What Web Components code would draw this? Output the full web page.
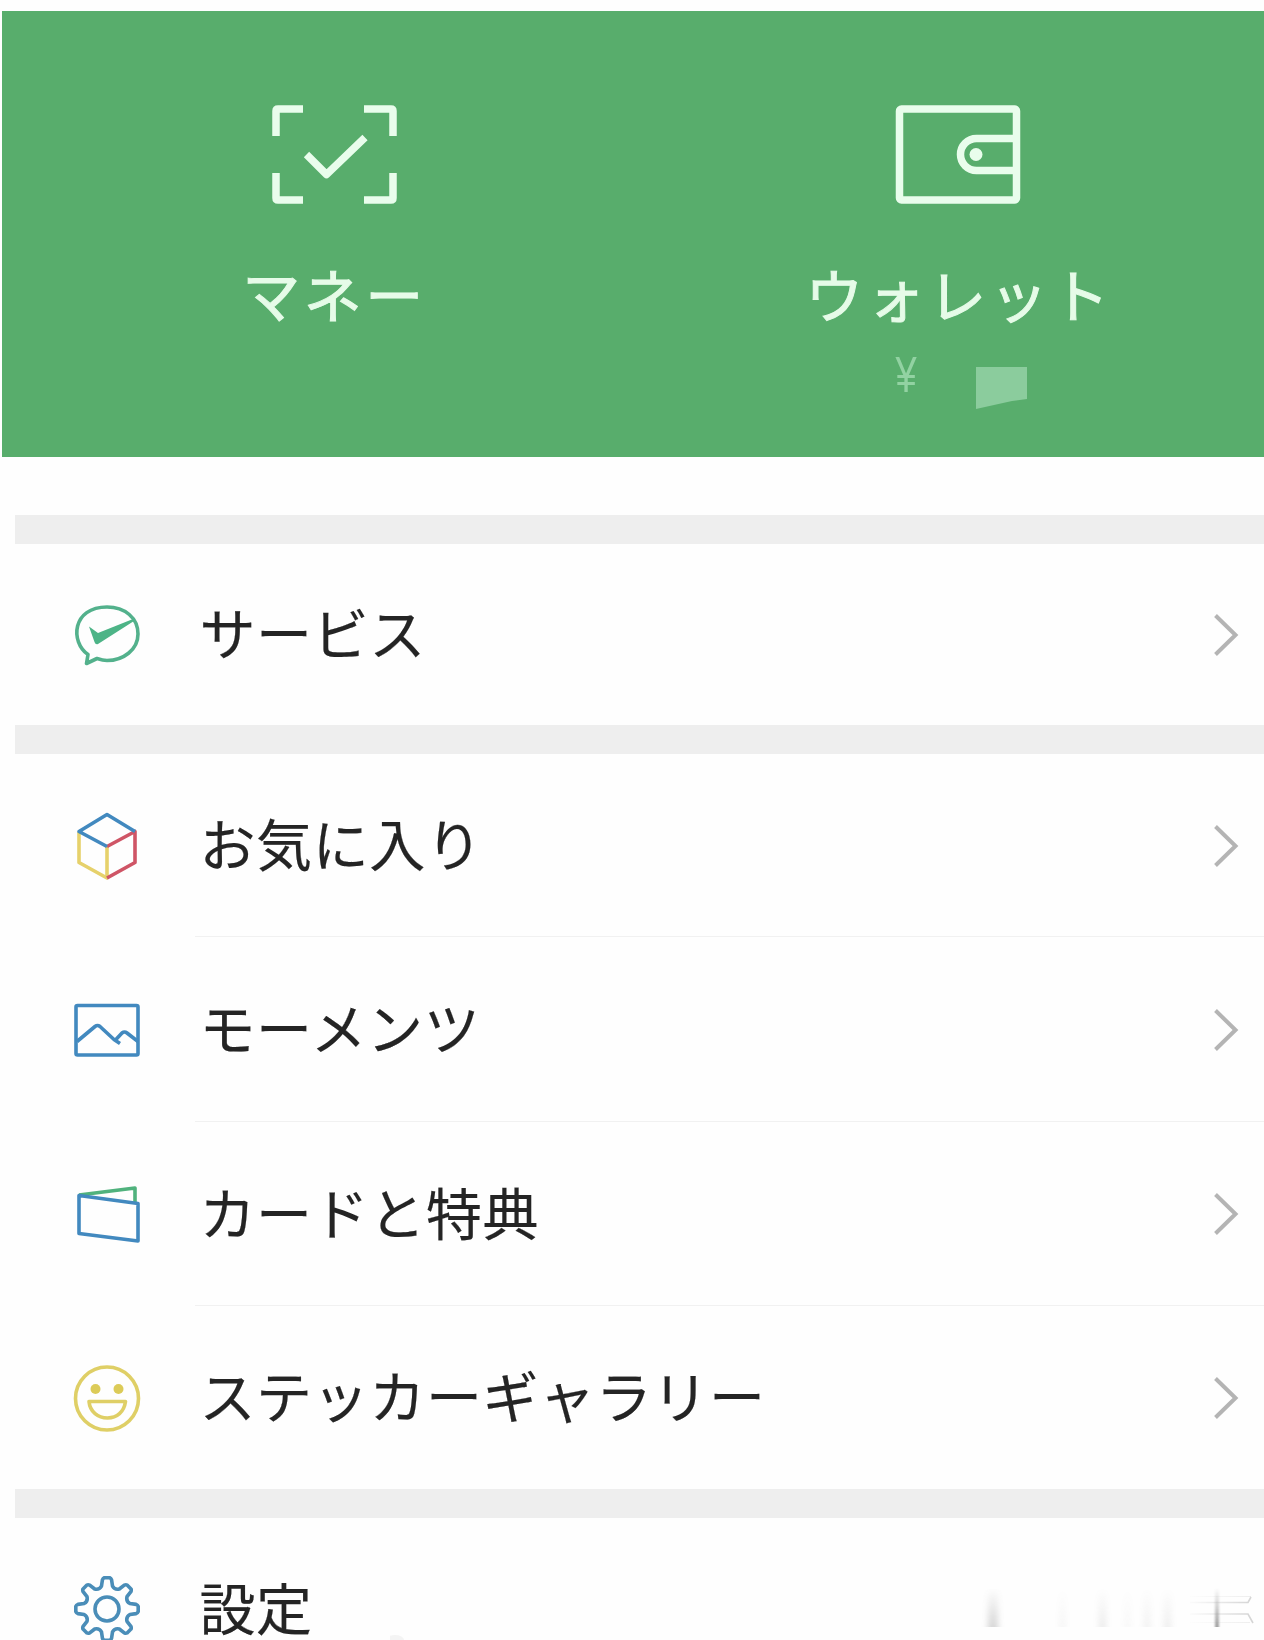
<!DOCTYPE html>
<html lang="ja">
<head>
<meta charset="utf-8">
<title>マイページ</title>
<style>
body {
    margin: 0;
    width: 1264px;
    height: 1640px;
    overflow: hidden;
    background: #fefefe;
    color: #242424;
    font-family: "Noto Sans CJK JP", sans-serif;
}
</style>
</head>
<body>

<me-page>
    <pay-panel slot="top">
        <pay-item icon="scan" style="--shift: 0">マネー</pay-item>
        <pay-item icon="wallet" style="--shift: 3px">ウォレット<wallet-balance slot="extra">¥</wallet-balance></pay-item>
    </pay-panel>

    <menu-group>
        <menu-row icon="service" style="--row: 181px">サービス</menu-row>
    </menu-group>

    <menu-group>
        <menu-row icon="cube" line style="--row: 183px">お気に入り</menu-row>
        <menu-row icon="photo" line style="--row: 185px">モーメンツ</menu-row>
        <menu-row icon="cards" line style="--row: 184px">カードと特典</menu-row>
        <menu-row icon="smile" style="--row: 183px">ステッカーギャラリー</menu-row>
    </menu-group>

    <menu-group>
        <menu-row icon="gear" plain style="--row: 182px">設定</menu-row>
    </menu-group>

    <corner-mark slot="mark"></corner-mark>
</me-page>

<script>
// eight rounded teeth around (40, 40)
function gearPath() {
    const point = (r, deg) => {
        const a = deg * Math.PI / 180;
        return (40 + r * Math.sin(a)).toFixed(1) + ' ' + (40 - r * Math.cos(a)).toFixed(1);
    };
    let d = '';
    for (let i = 0; i < 8; i++) {
        const a = i * 45;
        d += (i ? 'L' : 'M') + point(23.5, a - 13.5);
        d += 'L' + point(29.5, a - 9) + 'Q' + point(31, a - 7.5) + ' ' + point(31.3, a - 5);
        d += 'L' + point(31.3, a + 5) + 'Q' + point(31, a + 7.5) + ' ' + point(29.5, a + 9);
        d += 'L' + point(23.5, a + 13.5) + 'Q' + point(20.5, a + 22.5) + ' ' + point(23.5, a + 31.5);
    }
    return d + 'Z';
}

const icons = {
    scan: `<svg width="126" height="100" viewBox="0 0 126 100" fill="none" stroke="#e9fdec" stroke-width="7.5">
        <path d="M4 31V6Q4 4 6 4H31M92 4H119Q121 4 121 6V31M4 68V93Q4 95 6 95H31M92 95H119Q121 95 121 93V68"/>
        <path d="M34.500 49.500L54.500 69.500L93 32.500" stroke-linejoin="round"/>
    </svg>`,
    wallet: `<svg width="126" height="100" viewBox="0 0 126 100" fill="none" stroke="#e9fdec" stroke-width="7.5">
        <rect x="4.500" y="4" width="117" height="91" rx="2"/>
        <path d="M121 33.500H81.500A16 16 0 0 0 81.500 65.500H121"/>
        <circle cx="81" cy="49.500" r="6.500" fill="#e9fdec" stroke="none"/>
    </svg>`,
    service: `<path d="M21 59.500C3 47 5 12 40 12C58 12 71 23 71 39C71 55 56 65.500 40 65.500C36 65.500 33 64.500 30 63.500L19.500 68.500Z" stroke="#53b18c"/>
        <path d="M22 31.500L31 38L66 24L67 26L31 49Q28.500 50 27.500 47Z" fill="#4db487"/>`,
    cube: `<path d="M12 26V56.500L40 72V40.500" stroke="#e6d16b"/>
        <path d="M40 40.500L68 25.500V56.500L40 72" stroke="#cf5566"/>
        <path d="M68 25.500L40 8.500L12 25.500L40 40.500" stroke="#4289bf"/>`,
    photo: `<rect x="9" y="15.500" width="62" height="49.500" rx="1.500" stroke="#4289bf"/>
        <path d="M10 51.500L28 36.500Q30.500 34.500 33 36.500L47 49.500L53 53.500M48 50.500L55 43Q57.500 41 60 43L71 51.500" stroke="#4289bf"/>`,
    cards: `<path d="M12 21L68 14V29" stroke="#50b27d"/>
        <path d="M12 21.500L71 29.500V67L12 59.500Z" stroke="#4289bf"/>`,
    smile: `<circle cx="40" cy="40.500" r="31.500" stroke="#dfcf66"/>
        <circle cx="28.500" cy="31" r="5" fill="#dccb58"/><circle cx="51.500" cy="31" r="5" fill="#dccb58"/>
        <path d="M22 43.500H58.500C57 54 50 60 40.500 60S23 54 22 43.500Z" stroke="#dfcf66"/>`,
    gear: `<path d="${gearPath()}" stroke="#4a8db8"/><circle cx="40" cy="40" r="12" stroke="#4a8db8"/>`
};

class MePage extends HTMLElement {
    constructor() {
        super();
        this.attachShadow({ mode: 'open' }).innerHTML = `
<style>
:host {
    display: block;
    position: relative;
    width: 1264px;
    height: 1640px;
    overflow: hidden;
}
main {
    display: flex;
    flex-direction: column;
    padding-top: 11px;
}
.mark {
    position: absolute;
    left: 390px;
    bottom: 0;
}
</style>
<main><slot name="top"></slot><slot></slot></main>
<div class="mark"><slot name="mark"></slot></div>`;
    }
}

class PayPanel extends HTMLElement {
    constructor() {
        super();
        this.attachShadow({ mode: 'open' }).innerHTML = `
<style>
:host {
    display: grid;
    grid-template-columns: 623px 623px;
    box-sizing: border-box;
    height: 446px;
    margin: 0 0 58px 2px;
    padding: 94px 0 0 21px;
    background: #58ad6c;
}
</style>
<slot></slot>`;
    }
}

class PayItem extends HTMLElement {
    constructor() {
        super();
        this.attachShadow({ mode: 'open' }).innerHTML = `
<style>
:host {
    display: flex;
    flex-direction: column;
    align-items: center;
    color: #e6fbe8;
}
svg {
    display: block;
}
.label {
    margin: 48px 0 4px var(--shift);
    font-size: 58px;
    line-height: 80px;
    letter-spacing: 3.5px;
    white-space: nowrap;
    -webkit-text-stroke: 1px currentColor;
}
</style>
${icons[this.getAttribute('icon')]}
<div class="label"><slot></slot></div>
<slot name="extra"></slot>`;
    }
}

class WalletBalance extends HTMLElement {
    constructor() {
        super();
        this.attachShadow({ mode: 'open' }).innerHTML = `
<style>
:host {
    display: flex;
    align-items: flex-start;
    gap: 60px;
    margin: 16px 0 0 7px;
    color: #92d2a2;
    font-family: "Liberation Sans", sans-serif;
    font-size: 38px;
    line-height: 44px;
    letter-spacing: 0;
}
span {
    width: 20px;
    transform: scaleY(1.3);
}
svg {
    margin-top: 14px;
}
</style>
<span><slot></slot></span>
<svg width="51" height="42" viewBox="0 0 51 42"><path d="M0 0H51V32L36 34L0 42Z" fill="#8bcc9d"/></svg>`;
    }
}

class MenuGroup extends HTMLElement {
    constructor() {
        super();
        this.attachShadow({ mode: 'open' }).innerHTML = `
<style>
:host {
    display: flex;
    flex-direction: column;
    margin-left: 15px;
    border-top: 29px solid #eeeeee;
}
</style>
<slot></slot>`;
    }
}

class MenuRow extends HTMLElement {
    constructor() {
        super();
        this.attachShadow({ mode: 'open' }).innerHTML = `
<style>
:host {
    display: flex;
    align-items: center;
    gap: 48px;
    height: var(--row);
    padding-left: 52px;
}
.icon {
    flex: none;
}
.body {
    flex: 1;
    display: flex;
    align-items: center;
    justify-content: space-between;
    box-sizing: border-box;
    height: 100%;
    padding: 1px 25px 0 4.5px;
    border-bottom: 1px solid transparent;
}
:host([line]) .body {
    border-color: #f1f1f1;
}
:host([plain]) .arrow {
    display: none;
}
.text {
    padding-bottom: 7px;
    font-size: 56px;
    line-height: 56px;
    letter-spacing: .6px;
    white-space: nowrap;
    -webkit-text-stroke: .2px currentColor;
}
</style>
<svg class="icon" width="80" height="80" viewBox="0 0 80 80" fill="none" stroke-width="3.6" stroke-linejoin="round">${icons[this.getAttribute('icon')]}</svg>
<div class="body">
    <div class="text"><slot></slot></div>
    <svg class="arrow" width="26" height="44" viewBox="0 0 26 44" fill="none" stroke="#b4b4b4" stroke-width="4"><path d="M2.500 2.500L22.500 22L2.500 41.500"/></svg>
</div>`;
    }
}

// faint leftovers of a mark along the bottom edge
class CornerMark extends HTMLElement {
    constructor() {
        super();
        const bars = [[988, 10, .3], [1060, 5, .08], [1099, 7, .14], [1125, 5, .06], [1144, 6, .1], [1164, 7, .12], [1215, 4, .7]];
        this.attachShadow({ mode: 'open' }).innerHTML = `
<style>
:host {
    display: block;
}
svg {
    display: block;
}
</style>
<svg width="874" height="60" viewBox="390 1580 874 60" fill="none">
    <defs>
        <linearGradient id="v" x1="0" y1="0" x2="0" y2="1"><stop offset="0" stop-color="#777" stop-opacity="0"/><stop offset="1" stop-color="#777"/></linearGradient>
        <linearGradient id="h" gradientUnits="userSpaceOnUse" x1="1185" y1="0" x2="1250" y2="0"><stop offset="0" stop-color="#999" stop-opacity="0"/><stop offset="1" stop-color="#999" stop-opacity=".4"/></linearGradient>
        <filter id="soft" x="-1" width="3"><feGaussianBlur stdDeviation="3 0"/></filter>
        <filter id="thin" x="-1" width="3"><feGaussianBlur stdDeviation="1 0"/></filter>
    </defs>
    ${bars.map(([x, w, o]) => `<rect x="${x}" y="1588" width="${w}" height="39" fill="url(#v)" opacity="${o}" filter="url(#${w > 4 ? 'soft' : 'thin'})"/>`).join('')}
    <path d="M1190 1602.500H1248L1251 1597M1190 1614H1248L1253 1623" stroke="url(#h)" stroke-width="1.6"/>
    <path d="M1190 1596.500H1251M1190 1622.500H1250" stroke="url(#h)" stroke-width="1" opacity=".4"/>
    <ellipse cx="395" cy="1640" rx="9" ry="5" fill="#f4f4f4"/>
</svg>`;
    }
}

customElements.define('me-page', MePage);
customElements.define('pay-panel', PayPanel);
customElements.define('pay-item', PayItem);
customElements.define('wallet-balance', WalletBalance);
customElements.define('menu-group', MenuGroup);
customElements.define('menu-row', MenuRow);
customElements.define('corner-mark', CornerMark);
</script>
</body>
</html>
